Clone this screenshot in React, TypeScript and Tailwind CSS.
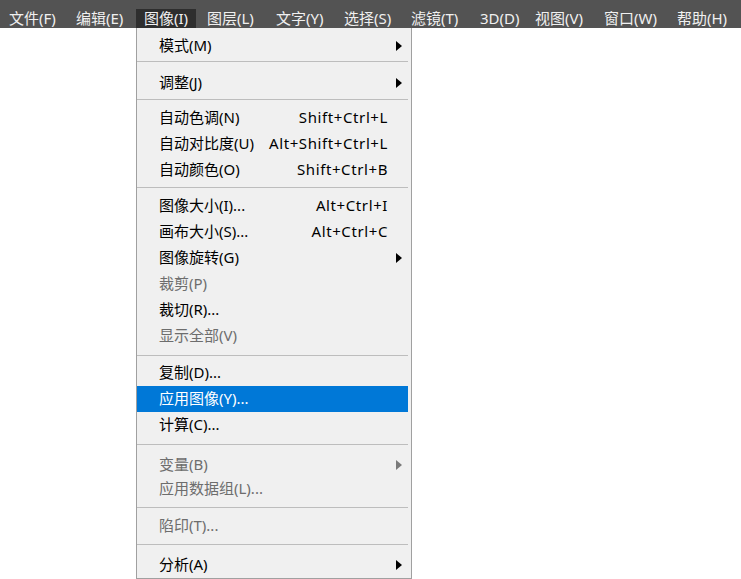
import React from "react";

type Entry =
  | {
      kind: "item";
      label: string;
      shortcut?: string;
      submenu?: boolean;
      disabled?: boolean;
      active?: boolean;
      h: string;
    }
  | { kind: "sep"; box: string };

const menuBar: { label: string; w: string; active?: boolean }[] = [
  { label: "文件(F)", w: "w-[67px]" },
  { label: "编辑(E)", w: "w-[68px]" },
  { label: "图像(I)", w: "w-[63px]", active: true },
  { label: "图层(L)", w: "w-[69px]" },
  { label: "文字(Y)", w: "w-[68px]" },
  { label: "选择(S)", w: "w-[67px]" },
  { label: "滤镜(T)", w: "w-[69px]" },
  { label: "3D(D)", w: "w-[55px]" },
  { label: "视图(V)", w: "w-[69px]" },
  { label: "窗口(W)", w: "w-[73px]" },
  { label: "帮助(H)", w: "w-[72px]" },
];

const entries: Entry[] = [
  { kind: "item", label: "模式(M)", submenu: true, h: "h-[26px]" },
  { kind: "sep", box: "h-[11px] pt-[2px]" },
  { kind: "item", label: "调整(J)", submenu: true, h: "h-[26px]" },
  { kind: "sep", box: "h-[9px] pt-[3px]" },
  { kind: "item", label: "自动色调(N)", shortcut: "Shift+Ctrl+L", h: "h-[26px]" },
  { kind: "item", label: "自动对比度(U)", shortcut: "Alt+Shift+Ctrl+L", h: "h-[26px]" },
  { kind: "item", label: "自动颜色(O)", shortcut: "Shift+Ctrl+B", h: "h-[26px]" },
  { kind: "sep", box: "h-[10px] pt-[4px]" },
  { kind: "item", label: "图像大小(I)...", shortcut: "Alt+Ctrl+I", h: "h-[26px]" },
  { kind: "item", label: "画布大小(S)...", shortcut: "Alt+Ctrl+C", h: "h-[26px]" },
  { kind: "item", label: "图像旋转(G)", submenu: true, h: "h-[26px]" },
  { kind: "item", label: "裁剪(P)", disabled: true, h: "h-[26px]" },
  { kind: "item", label: "裁切(R)...", h: "h-[26px]" },
  { kind: "item", label: "显示全部(V)", disabled: true, h: "h-[26px]" },
  { kind: "sep", box: "h-[11px] pt-[6px]" },
  { kind: "item", label: "复制(D)...", h: "h-[26px]" },
  { kind: "item", label: "应用图像(Y)...", active: true, h: "h-[26px]" },
  { kind: "item", label: "计算(C)...", h: "h-[26px]" },
  { kind: "sep", box: "h-[15px] pt-[6px]" },
  { kind: "item", label: "变量(B)", submenu: true, disabled: true, h: "h-[24px]" },
  { kind: "item", label: "应用数据组(L)...", disabled: true, h: "h-[24px]" },
  { kind: "sep", box: "h-[12px] pt-[6px]" },
  { kind: "item", label: "陷印(T)...", disabled: true, h: "h-[26px]" },
  { kind: "sep", box: "h-[13px] pt-[5px]" },
  { kind: "item", label: "分析(A)", submenu: true, h: "h-[26px]" },
];

function Arrow({ color }: { color: string }) {
  return (
    <svg width="6" height="10" viewBox="0 0 6 10" className="block">
      <polygon points="0,0 6,5 0,10" fill={color} />
    </svg>
  );
}

export default function App() {
  const font = {
    fontFamily: '"Noto Sans", "Noto Sans CJK SC", sans-serif',
  };
  return (
    <div className="relative w-[741px] h-[579px] bg-white overflow-hidden" style={font}>
      {/* application menu bar */}
      <div className="flex h-[28px] items-end bg-[#535353] pl-px text-[15px] text-[#f0f0f0]">
        {menuBar.map((m) => (
          <div key={m.label} className={`${m.w} h-[21px] shrink-0`}>
            <span
              className={`inline-flex h-[21px] items-center whitespace-nowrap px-2 pb-[2px] leading-none ${
                m.active ? "bg-[#2e2e2e]" : ""
              }`}
            >
              {m.label}
            </span>
          </div>
        ))}
      </div>

      {/* open "图像" dropdown */}
      <div className="absolute left-[136px] top-[28px] w-[276px] border-x border-b border-[#a0a0a0] bg-[#f0f0f0] pt-[5px] text-[15px]">
        {entries.map((e, i) =>
          e.kind === "sep" ? (
            <div key={i} className={`${e.box} mr-[3px]`}>
              <div className="h-px bg-[#bdbdbd]" />
            </div>
          ) : (
            <div
              key={i}
              className={`${e.h} mr-[3px] flex items-center pl-[22px] pr-[6px] leading-none ${
                e.active
                  ? "bg-[#0078d7] text-white"
                  : e.disabled
                  ? "text-[#6d6d6d]"
                  : "text-black"
              }`}
            >
              <span className="flex-1 whitespace-nowrap pb-px">{e.label}</span>
              {e.shortcut && (
                <span className="mr-[14px] whitespace-nowrap pb-px tracking-[0.6px]">
                  {e.shortcut}
                </span>
              )}
              {e.submenu && (
                <Arrow color={e.disabled ? "#7a7a7a" : "#000000"} />
              )}
            </div>
          )
        )}
      </div>
    </div>
  );
}
